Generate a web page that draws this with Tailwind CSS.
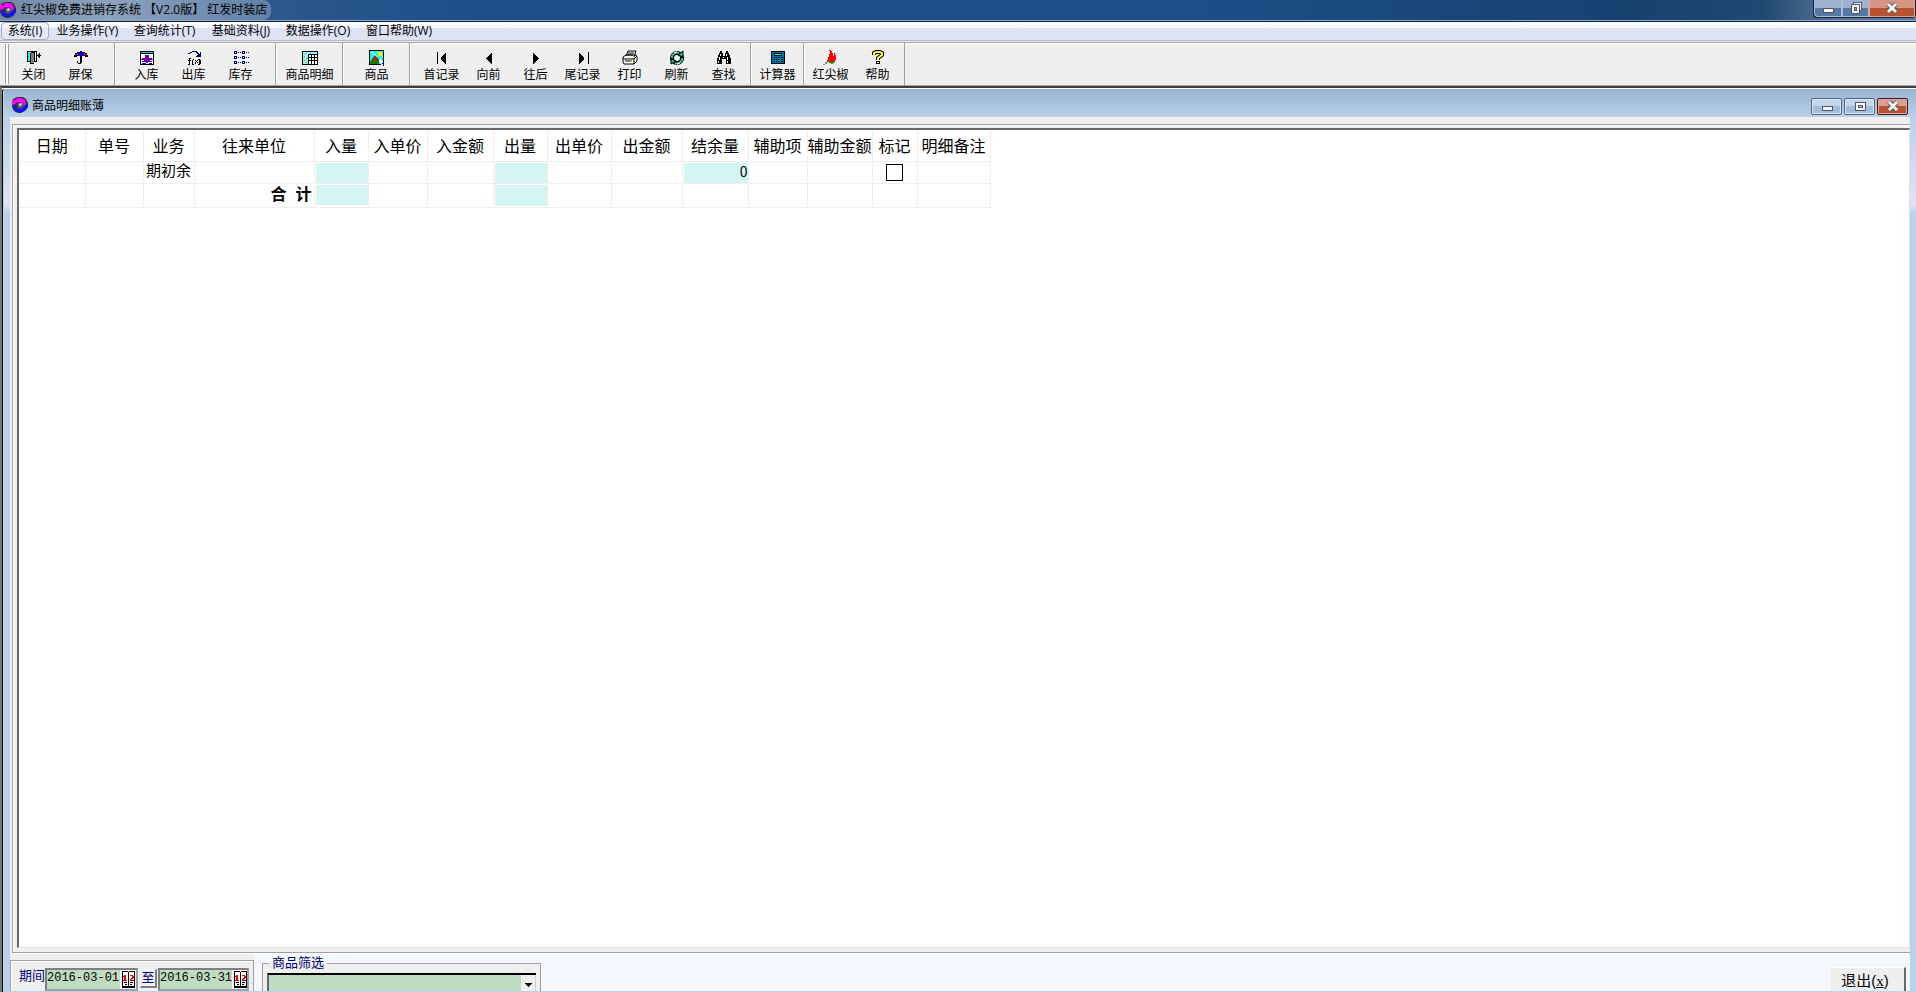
<!DOCTYPE html>
<html lang="zh-CN">
<head>
    <meta charset="UTF-8">
    <meta name="viewport" content="width=device-width, initial-scale=1.0">
    <title>红尖椒免费进销存系统</title>
    <script src="https://cdn.jsdelivr.net/npm/@tailwindcss/browser@4"></script>
</head>
<body class="h-screen flex flex-col overflow-hidden bg-[#efefef] text-black text-[12px] leading-4 font-['Liberation_Sans','Noto_Sans_CJK_SC',sans-serif]">
    <!-- Shared icon -->
    <svg class="hidden">
        <symbol id="logo" viewBox="0 0 16 16">
            <path fill="#333" d="M5 0h6l3 2 2 4v4l-3 4-4 2H6l-4-2-2-4V5l1-3z"/>
            <path fill="#f0f" d="M0 3h3l2-2h5l3 2 1 4-2 2-3-3-3-1-3 2-2 1-2-1z"/>
            <path fill="#11f" d="M1 8l2 1 3 3 4 0 2-2 3-4 1 3-2 4-4 2H6l-4-2z"/>
            <path fill="#55507a" d="M5 7l2-2 4 1 1 3-3 3-3-1z"/>
            <path fill="#ccc" d="M7 7l2-1 1 1-1 2H7z"/>
        </symbol>
    </svg>

    <!-- Title bar -->
    <header class="relative flex h-[22px] shrink-0 items-start justify-between border-b border-[#101c33] bg-[linear-gradient(to_right,#3d6291,#1d4f88_25%,#1d5089_60%,#17416f_85%,#1f4872_92%,#5b7597_96%)]">
        <div class="absolute inset-x-0 bottom-0 h-px bg-[#8fabd3]"></div>
        <div class="relative flex h-5 items-center gap-[5px] rounded-r-lg bg-linear-to-r from-[#6f86a6] via-[#8ea3bd] via-40% to-[#5f80a8] pr-1">
            <svg class="size-4"><use href="#logo"/></svg>
            <h1 class="whitespace-pre font-['Open_Sans','Noto_Sans_CJK_SC',sans-serif]">红尖椒免费进销存系统 【V2.0版】 红发时装店</h1>
        </div>
        <div class="relative flex h-[18px] rounded-b border border-t-0 border-[#14203c] bg-[#14203c]">
            <button aria-label="最小化" class="flex w-7 items-center justify-center rounded-bl border border-t-0 border-[#a9bdd8] bg-linear-to-b from-[#9db2ce] from-50% to-[#5678a5] to-50%">
                <svg class="h-3 w-3" viewBox="0 0 12 12" shape-rendering="crispEdges"><path d="M1 6h11v5H1z" fill="#535666"/><path d="M2 7h9v3H2z" fill="#f4f4ef"/></svg>
            </button>
            <button aria-label="还原" class="flex w-[27px] items-center justify-center border border-t-0 border-[#a9bdd8] bg-linear-to-b from-[#9db2ce] from-50% to-[#5678a5] to-50%">
                <svg class="h-3 w-3" viewBox="0 0 12 12" shape-rendering="crispEdges"><path d="M3 0h9v9H3z" fill="#535666"/><path d="M4 1h7v7H4z" fill="#f4f4ef"/><path d="M1 2h9v10H1z" fill="#535666"/><path d="M2 3h7v8H2z" fill="#f4f4ef"/><path d="M4 5h3v4H4z" fill="#535666"/><path d="M5 6h1v2H5z" fill="#8ba4c4"/></svg>
            </button>
            <button aria-label="关闭" class="flex w-[46px] items-center justify-center border border-t-0 border-[#dca28f] bg-linear-to-b from-[#d99384] from-50% to-[#b85332] to-50%">
                <svg class="h-3 w-3" viewBox="0 0 12 12"><path d="M2 2l8 8M10 2l-8 8" stroke="#535666" stroke-width="5"/><path d="M2 2l8 8M10 2l-8 8" stroke="#f4f4ef" stroke-width="3"/></svg>
            </button>
        </div>
    </header>

    <!-- Menu bar -->
    <nav class="flex h-[19px] shrink-0 items-center border-b border-[#b3bbcd] bg-linear-to-b from-white via-[#f0f3fa] via-35% to-[#dde2f5] to-36% pl-px font-['Open_Sans','Noto_Sans_CJK_SC',sans-serif]">
        <button class="h-[18px] w-12 rounded-sm border border-[#a3adbd] bg-[#eef2fa]/60">系统(I)</button>
        <button class="w-[77px]">业务操作(Y)</button>
        <button class="w-[77px]">查询统计(T)</button>
        <button class="w-[76px]">基础资料(J)</button>
        <button class="w-[78px]">数据操作(O)</button>
        <button class="w-[84px]">窗口帮助(W)</button>
    </nav>

    <!-- Toolbar -->
    <div class="mt-px flex h-[44px] shrink-0 border-y border-t-[#9f9f9f] border-b-[#9f9f9f] pl-[5px] font-['Noto_Sans_CJK_SC',sans-serif] shadow-[inset_0_1px_white]">
        <div class="my-px mr-px w-1 border-x border-[#a0a0a0] bg-white"></div>
        <div class="flex border-r border-[#a0a0a0] pr-[10px]">
            <button class="flex w-[47px] flex-col items-center pt-[7px]">
                <svg class="size-4" viewBox="0 0 16 16" shape-rendering="crispEdges"><path d="M1 1h10v11H1z"/><path d="M2 2h2v9H2z" fill="#0ff"/><path d="M4 2h1v9H4zM9 2h1v9H9z" fill="#fff"/><path d="M5 3h3v11H5z" fill="#808080"/><path d="M8 2h1v10H8zM4 3h1v11H4zM5 13h3v1H5zM12 5h3v1h-3zM11 5h1v1h-1zM12 4h1v3h-1zM13 3h1v5h-1z"/></svg>
                <span>关闭</span>
            </button>
            <button class="flex w-[47px] flex-col items-center pt-[7px]">
                <svg class="size-4" viewBox="0 0 16 16" shape-rendering="crispEdges"><path d="M7 1h2v1h3v1h2v2h1v2h-3V6H9v7H8v1H5v-1H4v-2h1v2h2V6H4v1H1V5h1V3h2V2h3z"/><path d="M7 2h2v1h2v3H5V3h2z" fill="#00f"/><path d="M4 3h1v2H2V4h2zM11 3h1v1h2v1h-3z" fill="#f00"/></svg>
                <span>屏保</span>
            </button>
        </div>
        <div class="flex border-x border-l-white border-r-[#a0a0a0] pr-[11px] pl-[7px]">
            <button class="flex w-[47px] flex-col items-center pt-[7px]">
                <svg class="size-4" viewBox="0 0 16 16" shape-rendering="crispEdges"><path d="M1 1h14v14H1z"/><path d="M2 4h12v10H2z" fill="#fff"/><path d="M2 2h12v1H2z" fill="#00d8d8"/><path d="M6 5h4v3h3v1h-1v1h-1v1h-1v1H9v1H7v-1H6v-1H5v-1H4V9H3V8h3z" fill="#800080"/><path d="M2 9h2v1H2zM12 9h2v1h-2zM3 11h3v1H3zM10 11h3v1h-3zM3 13h4v1H3zM10 13h3v1h-3z" fill="#00f"/></svg>
                <span>入库</span>
            </button>
            <button class="flex w-[47px] flex-col items-center pt-[7px]">
                <svg class="size-4" viewBox="0 0 16 16" shape-rendering="crispEdges"><path d="M1 5h1V3h2V2h2V1h5v1h1v1h1v1h1V2h1v5h-5V6h1V5h1V4h-1V3h-1V2H6v1H4v1H2v1z" fill="#000080"/><path d="M3 8h2v1H4v1h1v1H4v4H2v-1h1v-3H2v-1h1zM7 9h1v1H7v4h1v1H6v-5h1zM9 10h1v1h1v1h1v1h-1v-1h-1v2H9v-2h1v-1H9zM11 10h1v1h-1zM12 9h2v1h1v4h-1v1h-2v-1h1v-4h-1z"/></svg>
                <span>出库</span>
            </button>
            <button class="flex w-[47px] flex-col items-center pt-[7px]">
                <svg class="size-4" viewBox="0 0 16 16" shape-rendering="crispEdges"><path d="M1 1h3v3H1zM1 6h3v3H1zM1 11h3v3H1zM9 1h3v3H9zM9 6h3v3H9zM9 11h3v3H9zM5 2h1v1H5zM7 2h1v1H7zM5 7h1v1H5zM7 7h1v1H7zM5 12h1v1H5zM7 12h1v1H7zM13 2h1v1h-1zM15 2h1v1h-1zM13 7h1v1h-1zM15 7h1v1h-1zM13 12h1v1h-1zM15 12h1v1h-1z" fill="#000080"/><path d="M2 2h1v1H2zM2 7h1v1H2zM2 12h1v1H2zM10 2h1v1h-1zM10 7h1v1h-1zM10 12h1v1h-1z" fill="#fff"/></svg>
                <span>库存</span>
            </button>
        </div>
        <button class="flex w-[67px] flex-col items-center border-x border-l-white border-r-[#a0a0a0] pt-[7px]">
            <svg class="size-4" viewBox="0 0 16 16" shape-rendering="crispEdges"><path d="M0 1h16v14H0z"/><path d="M1 2h14v2H1z" fill="#8ff"/><path d="M1 4h5v10H1z" fill="#9ee"/><path d="M2 6h1v1H2zM4 8h1v1H4zM2 10h1v1H2zM4 12h1v1H4zM3 3h1v1H3zM8 3h1v1H8z" fill="#c66"/><path d="M7 5h2v2H7zM10 5h2v2h-2zM13 5h2v2h-2zM7 8h2v2H7zM13 8h2v2h-2zM7 11h2v3H7zM10 11h2v3h-2zM13 11h2v3h-2z" fill="#fff"/><path d="M10 8h2v2h-2z" fill="#ff8"/></svg>
            <span>商品明细</span>
        </button>
        <button class="flex w-[67px] flex-col items-center border-x border-l-white border-r-[#a0a0a0] pt-[7px]">
            <svg class="size-4" viewBox="0 0 16 16" shape-rendering="crispEdges"><path d="M0 0h15v15H0z"/><path d="M1 1h13v13H1z" fill="#0ff"/><path d="M2 2h3v1H2zM4 4h3v1H4z" fill="#fff"/><path d="M9 2h4v4H9z" fill="#ff0"/><path d="M8 1h1v1H8zM13 1h1v1h-1zM8 6h1v1H8zM13 6h1v1h-1z" fill="#ff0"/><path d="M5 6h2v1h1v1h1v1h1v1h1v2H2v-2h1V8h1V7h1z" fill="#804000"/><path d="M1 11h9v3H1z" fill="#008000"/><path d="M10 9h2v1h1v1h1v3h-3z" fill="#fff"/><path d="M12 12h4v4h-4z" fill="#efefef"/><path d="M14 12h1v4h-1zM13 13h1v1h-1z" fill="#000080"/></svg>
            <span>商品</span>
        </button>
        <div class="flex border-x border-l-white border-r-[#a0a0a0] pr-[3px] pl-[7px]">
            <button class="flex w-[47px] flex-col items-center pt-[7px]">
                <svg class="size-4" viewBox="0 0 16 16" shape-rendering="crispEdges"><path d="M3 2h1v12H3zM12 3v11h-1v-1h-1v-1H9v-1H8v-1H7V7h1V6h1V5h1V4h1V3z"/></svg>
                <span>首记录</span>
            </button>
            <button class="flex w-[47px] flex-col items-center pt-[7px]">
                <svg class="size-4" viewBox="0 0 16 16" shape-rendering="crispEdges"><path d="M11 3v11h-1v-1H9v-1H8v-1H7v-1H6V9H5V8h1V7h1V6h1V5h1V4h1V3z"/></svg>
                <span>向前</span>
            </button>
            <button class="flex w-[47px] flex-col items-center pt-[7px]">
                <svg class="size-4" viewBox="0 0 16 16" shape-rendering="crispEdges"><path d="M5 3v11h1v-1h1v-1h1v-1h1v-1h1V9h1V8h-1V7H9V6H8V5H7V4H6V3z"/></svg>
                <span>往后</span>
            </button>
            <button class="flex w-[47px] flex-col items-center pt-[7px]">
                <svg class="size-4" viewBox="0 0 16 16" shape-rendering="crispEdges"><path d="M4 3v11h1v-1h1v-1h1v-1h1v-1h1V7H8V6H7V5H6V4H5V3zM13 2h1v12h-1z"/></svg>
                <span>尾记录</span>
            </button>
            <button class="flex w-[47px] flex-col items-center pt-[7px]">
                <svg class="size-4" viewBox="0 0 16 16"><path d="M4 6l2-5h8l-2 6M1 7l3-2h10l1 2v4l-3 3H2l-1-2zM1 9h11l3-3M12 9v5" fill="#fff" stroke="#000"/><path d="M6 3h6M5 5h6M3 11h7" stroke="#000"/><path d="M8 11h2" stroke="#dd0"/></svg>
                <span>打印</span>
            </button>
            <button class="flex w-[47px] flex-col items-center pt-[7px]">
                <svg class="size-4" viewBox="0 0 16 16"><circle cx="8" cy="8" r="5" stroke="#000" stroke-width="4" fill="none"/><path d="M3 8a5 5 0 0 1 7-5M13 8a5 5 0 0 1-7 5" stroke="#2dc08b" stroke-width="2" fill="none"/><path d="M9 5l5-4v6zM7 11l-5 3V9z" fill="#2dc08b" stroke="#000"/><path d="M5 3l3-1M11 13l-3 1" stroke="#fff"/></svg>
                <span>刷新</span>
            </button>
            <button class="flex w-[47px] flex-col items-center pt-[7px]">
                <svg class="size-4" viewBox="0 0 16 16" shape-rendering="crispEdges"><path d="M4 1h2v2h1v3h2V3h1V1h2v2h1v2h1v3h1v6h-5V9H6v5H1V8h1V5h1V3h1z"/><path d="M4 4h1v2H4zM3 7h1v3H3zM2 11h1v2H2zM10 4h1v2h-1zM11 7h1v3h-1zM11 11h1v2h-1zM7 7h1v1H7z" fill="#fff"/></svg>
                <span>查找</span>
            </button>
        </div>
        <button class="flex w-[53px] flex-col items-center border-x border-l-white border-r-[#a0a0a0] pt-[7px]">
            <svg class="size-4" viewBox="0 0 16 16" shape-rendering="crispEdges"><path d="M1 1h14v13H1z"/><path d="M2 2h12v11H2z" fill="#0070a8"/><path d="M4 3h8v3H4z"/><path d="M5 4h6v1H5z" fill="#0ff"/><path d="M4 7h1v1H4zM6 7h1v1H6zM8 7h1v1H8zM11 7h2v1h-2zM4 9h1v1H4zM6 9h1v1H6zM8 9h1v1H8zM11 9h2v1h-2zM4 11h1v1H4zM6 11h1v1H6zM8 11h1v1H8zM11 11h2v1h-2z"/></svg>
            <span>计算器</span>
        </button>
        <div class="flex border-x border-l-white border-r-[#a0a0a0] pr-[3px] pl-[2px]">
            <button class="flex w-[47px] flex-col items-center pt-[7px]">
                <svg class="size-4" viewBox="0 0 16 16" shape-rendering="crispEdges"><path d="M6 0h2v1h1v2h1v3h1V3h1v2h1v5h-1v2h-2v1H6v-1H4v-2h1V7h1V4h1V1H6z" fill="#f00"/><path d="M4 11h2v1h4v-1h1v2h-1v1H8v-1H6v-1H4z" fill="#0a0"/><path d="M2 12h3v1H4v1H2v1H0v-1h2z" fill="#a98d6a"/></svg>
                <span>红尖椒</span>
            </button>
            <button class="flex w-[47px] flex-col items-center pt-[7px]">
                <svg class="size-4" viewBox="0 0 16 16"><path d="M4 5V3l2-1h4l2 1v2L8 8v2M8 11v3" fill="none" stroke="#000" stroke-width="4"/><path d="M4 5V3l2-1h4l2 1v2L8 8v2M8 12v1" fill="none" stroke="#ff3" stroke-width="2"/></svg>
                <span>帮助</span>
            </button>
        </div>
    </div>

    <!-- Ledger window -->
    <main class="flex min-h-0 flex-1 flex-col border-t-2 border-l-2 border-t-[#3b4047] border-l-[#777]">
        <div class="flex min-h-0 flex-1 flex-col rounded-tl border-t border-l border-t-white border-l-black bg-[#b9d1ea] pb-px pl-px">
            <div class="flex h-7 shrink-0 items-center justify-between bg-linear-to-b from-[#99b4d1] to-[#b9d1ea] pr-2 pl-2">
                <div class="flex items-center gap-1 pt-1 font-['Noto_Sans_CJK_SC',sans-serif]">
                    <svg class="size-4"><use href="#logo"/></svg>
                    <h2>商品明细账薄</h2>
                </div>
                <div class="flex gap-[2px] pt-[6px]">
                    <button aria-label="最小化" class="flex h-[17px] w-[31px] items-center justify-center rounded-xs border border-[#4d6482] bg-linear-to-b from-[#c3d5ea] from-50% to-[#9fbddd] to-50% shadow-[inset_0_0_0_1px_#dce9f6]">
                        <svg class="h-3 w-3" viewBox="0 0 12 12" shape-rendering="crispEdges"><path d="M1 6h11v5H1z" fill="#535666"/><path d="M2 7h9v3H2z" fill="#f4f4ef"/></svg>
                    </button>
                    <button aria-label="最大化" class="flex h-[17px] w-[31px] items-center justify-center rounded-xs border border-[#4d6482] bg-linear-to-b from-[#c3d5ea] from-50% to-[#9fbddd] to-50% shadow-[inset_0_0_0_1px_#dce9f6]">
                        <svg class="h-3 w-3" viewBox="0 0 12 12" shape-rendering="crispEdges"><path d="M1 2h11v9H1z" fill="#535666"/><path d="M2 3h9v7H2z" fill="#f4f4ef"/><path d="M4 5h5v3H4z" fill="#535666"/><path d="M5 6h3v1H5z" fill="#a9c3e0"/></svg>
                    </button>
                    <button aria-label="关闭窗口" class="flex h-[17px] w-[31px] items-center justify-center rounded-xs border border-[#431a1c] bg-linear-to-b from-[#dc9f94] from-50% to-[#b85332] to-50% shadow-[inset_0_0_0_1px_#e2ab9b]">
                        <svg class="h-3 w-3" viewBox="0 0 12 12"><path d="M2 2l8 8M10 2l-8 8" stroke="#535666" stroke-width="5"/><path d="M2 2l8 8M10 2l-8 8" stroke="#f4f4ef" stroke-width="3"/></svg>
                    </button>
                </div>
            </div>

            <div class="flex min-h-0 flex-1 bg-linear-to-b from-[#b9d1ea] via-[#dfe3f5] via-10% to-[#b9d1ea] to-11%">
                <div class="mr-[6px] ml-[6px] flex min-w-0 flex-1 flex-col bg-[#f4f7fd]">
                    <!-- Grid -->
                    <div class="flex min-h-0 flex-1 flex-col bg-[#efefef] pt-[7px] pb-px pl-[2px]">
                        <div class="flex min-h-0 flex-1 flex-col border-y border-l border-[#a0a0a0] pb-1 pl-1 pt-[3px] shadow-[inset_1px_1px_white,0_1px_white]">
                            <div class="flex-1 overflow-hidden border-2 border-r border-b border-t-[#696969] border-l-[#696969] border-r-[#e3e3e3] border-b-[#e3e3e3] bg-white pt-px">
                                <table class="w-[971px] table-fixed border-collapse [&_td]:border [&_td]:border-t-0 [&_td]:border-l-0 [&_td]:border-[#efefef] [&_td]:p-0 [&_th]:border [&_th]:border-t-0 [&_th]:border-l-0 [&_th]:border-[#efefef] [&_th]:p-0 [&_th]:pt-[2px] [&_th]:font-normal">
                                    <colgroup>
                                        <col class="w-[66px]"><col class="w-[58px]"><col class="w-[51px]"><col class="w-[120px]"><col class="w-[54px]"><col class="w-[59px]"><col class="w-[66px]"><col class="w-[54px]"><col class="w-[64px]"><col class="w-[71px]"><col class="w-[66px]"><col class="w-[59px]"><col class="w-[65px]"><col class="w-[45px]"><col class="w-[73px]">
                                    </colgroup>
                                    <thead>
                                        <tr class="h-[30px] whitespace-nowrap text-[16px]">
                                            <th>日期</th><th>单号</th><th>业务</th><th>往来单位</th><th>入量</th><th>入单价</th><th>入金额</th><th>出量</th><th>出单价</th><th>出金额</th><th>结余量</th><th>辅助项</th><th>辅助金额</th><th>标记</th><th>明细备注</th>
                                        </tr>
                                    </thead>
                                    <tbody>
                                        <tr class="h-[22px] text-[15px]">
                                            <td></td><td></td><td class="pb-[2px]! text-center">期初余</td><td></td><td class="bg-[#d5f5f5] shadow-[inset_1px_1px_white]"></td><td></td><td></td><td class="bg-[#d5f5f5] shadow-[inset_1px_1px_white]"></td><td></td><td></td><td class="bg-[#d5f5f5] pb-[2px]! text-right font-['Noto_Sans_CJK_SC',sans-serif] text-[14px] shadow-[inset_1px_1px_white]">0</td><td></td><td></td>
                                            <td><input type="checkbox" aria-label="标记" class="mx-auto block size-[17px] appearance-none border border-black bg-white"></td><td></td>
                                        </tr>
                                        <tr class="h-[24px] text-[16px]">
                                            <td></td><td></td><td></td><td class="whitespace-pre pr-[2px]! text-right font-bold">合  计</td><td class="bg-[#d5f5f5] shadow-[inset_1px_1px_white,inset_0_-2px_white]"></td><td></td><td></td><td class="bg-[#d5f5f5] shadow-[inset_1px_1px_white,inset_0_-1px_white]"></td><td></td><td></td><td></td><td></td><td></td><td></td><td></td>
                                        </tr>
                                    </tbody>
                                </table>
                            </div>
                        </div>
                    </div>

                    <!-- Filter row -->
                    <div class="flex h-[37px] shrink-0 items-stretch overflow-hidden text-[#000080]">
                        <div class="w-[244px] shrink-0 bg-[#efefef] pt-[6px]">
                            <form class="flex h-8 items-start border-x border-t border-[#a0a0a0] pt-[7px] pl-[8px] text-[13px] shadow-[inset_1px_1px_white]">
                                <label for="dateFrom">期间</label>
                                <div class="flex h-[23px] w-[93px] border-2 border-t-[#808080] border-l-[#808080] border-r-[#a0a0a0] border-b-[#a0a0a0] bg-[#c0dcc0]">
                                    <input id="dateFrom" type="text" value="2016-03-01" class="h-4 min-w-0 flex-1 font-['Liberation_Mono',monospace] text-[12px] text-black">
                                    <button type="button" aria-label="选择开始日期" class="flex w-[16px] shrink-0 justify-center border-t border-l border-white bg-[#efefef]">
                                        <svg class="h-[17px] w-[13px] shrink-0" viewBox="0 0 13 17" shape-rendering="crispEdges"><path d="M0 0h6v1h1V0h6v17H0z"/><path d="M1 1h5v14H1zM7 1h5v14H7z" fill="#fff"/><path d="M2 4h2v5h1v1H1V9h1V6H1V5h1zM8 4h3v1h1v2h-1v1h-1v1h2v1H8V8h1V7h1V5H8z" fill="#f00"/><path d="M2 11h3v1H2zM8 11h3v1H8zM3 13h2v1H3zM8 13h2v1H8z"/></svg>
                                    </button>
                                </div>
                                <button type="button" class="ml-[2px] mt-px flex h-[19px] w-[17px] items-center justify-center border-t border-r-2 border-b-2 border-l border-t-white border-r-[#808080] border-b-[#808080] border-l-white">至</button>
                                <div class="ml-px flex h-[23px] w-[91px] border-2 border-t-[#808080] border-l-[#808080] border-r-[#a0a0a0] border-b-[#a0a0a0] bg-[#c0dcc0]">
                                    <input type="text" aria-label="结束日期" value="2016-03-31" class="h-4 min-w-0 flex-1 font-['Liberation_Mono',monospace] text-[12px] text-black">
                                    <button type="button" aria-label="选择结束日期" class="flex w-[15px] shrink-0 justify-center border-t border-l border-white bg-[#efefef]">
                                        <svg class="h-[17px] w-[13px] shrink-0" viewBox="0 0 13 17" shape-rendering="crispEdges"><path d="M0 0h6v1h1V0h6v17H0z"/><path d="M1 1h5v14H1zM7 1h5v14H7z" fill="#fff"/><path d="M2 4h2v5h1v1H1V9h1V6H1V5h1zM8 4h3v1h1v2h-1v1h-1v1h2v1H8V8h1V7h1V5H8z" fill="#f00"/><path d="M2 11h3v1H2zM8 11h3v1H8zM3 13h2v1H3zM8 13h2v1H8z"/></svg>
                                    </button>
                                </div>
                            </form>
                        </div>
                        <fieldset class="mt-px ml-2 h-[50px] w-[279px] shrink-0 border border-[#a0a0a0] bg-[#efefef] px-1 pt-[2px]">
                            <legend class="ml-[2px] px-[3px] text-[13px]"><label for="goods">商品筛选</label></legend>
                            <div class="relative">
                                <select id="goods" class="h-7 w-full appearance-none border-t-2 border-l-2 border-t-black border-l-[#696969] bg-[#c0dcc0]"><option></option></select>
                                <svg class="pointer-events-none absolute top-[2px] right-px h-6 w-[14px] bg-[#efefef]" viewBox="0 0 14 24" shape-rendering="crispEdges"><path d="M4 8h7v1h-1v1H9v1H8v1H7v-1H6v-1H5V9H4z"/></svg>
                            </div>
                        </fieldset>
                        <button class="mt-[13px] mr-1 ml-auto h-8 w-[77px] shrink-0 border-t border-r-2 border-l border-t-white border-r-[#696969] border-l-white bg-[#efefef] pr-1 pb-[6px] text-[15px] text-black">退出(<u class="font-['Liberation_Serif',serif]">x</u>)</button>
                    </div>
                </div>
            </div>
        </div>
    </main>
</body>
</html>
